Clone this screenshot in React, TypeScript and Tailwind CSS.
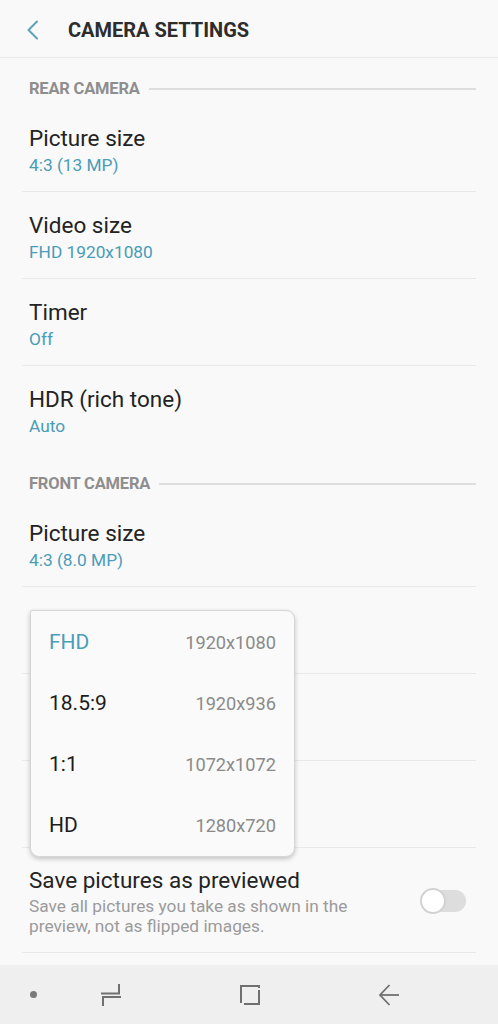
import React from "react";

const teal = "text-[#4a9cb8]";

function Row({ title, sub, divider = true }: { title?: string; sub?: string; divider?: boolean }) {
  return (
    <div className={`mx-[22px] h-[87px] px-[7px] pt-[20px] ${divider ? "border-b border-[#e9e9e9]" : ""}`}>
      {title ? <div className="text-[22.5px] leading-[26px] text-[#232323]">{title}</div> : null}
      {sub ? <div className={`mt-[3px] text-[17.3px] leading-[22px] ${teal}`}>{sub}</div> : null}
    </div>
  );
}

function Section({ label }: { label: string }) {
  return (
    <div className="flex h-[47px] items-center pl-[29px] pr-[22px] pt-[14px]">
      <span className="text-[16.5px] font-bold leading-[20px] tracking-[-0.2px] text-[#8e8e8e]">{label}</span>
      <div className="ml-[9px] h-[2px] flex-1 bg-[#dedede]" />
    </div>
  );
}

function Option({ left, right, active = false }: { left: string; right: string; active?: boolean }) {
  return (
    <div className="flex h-[61px] items-center justify-between px-[18px]">
      <span className={`text-[21px] ${active ? "text-[#4a9cb8]" : "text-[#1c1c1c]"}`}>{left}</span>
      <span className="text-[18.2px] text-[#8a8a8a]">{right}</span>
    </div>
  );
}

export default function App() {
  return (
    <div
      className="relative flex h-[1024px] w-[498px] flex-col overflow-hidden bg-[#f9f9f9]"
      style={{ fontFamily: "Roboto, 'Noto Sans', sans-serif" }}
    >
      {/* Header */}
      <div className="flex h-[58px] shrink-0 items-center border-b border-[#e8e8e8] pt-[3px]">
        <svg width="14" height="20" viewBox="0 0 14 20" className="ml-[26px]">
          <path d="M11 1.5 L2.5 10 L11 18.5" fill="none" stroke="#5aa3bb" strokeWidth="2" strokeLinecap="round" strokeLinejoin="round" />
        </svg>
        <span className="ml-[28px] text-[20px] font-bold text-[#2d2d2d]">CAMERA SETTINGS</span>
      </div>

      <Section label="REAR CAMERA" />
      <Row title="Picture size" sub="4:3 (13 MP)" />
      <Row title="Video size" sub="FHD 1920x1080" />
      <Row title="Timer" sub="Off" />
      <Row title="HDR (rich tone)" sub="Auto" divider={false} />

      <Section label="FRONT CAMERA" />
      <Row title="Picture size" sub="4:3 (8.0 MP)" />
      <Row />
      <Row />
      <Row />

      {/* Save pictures as previewed */}
      <div className="mx-[22px] flex h-[105px] items-center justify-between border-b border-[#e9e9e9] pl-[7px] pr-[10px] pt-[2px]">
        <div>
          <div className="text-[22.5px] leading-[26px] text-[#232323]">Save pictures as previewed</div>
          <div className="mt-[3px] text-[17.3px] leading-[20px] text-[#9b9b9b]">
            Save all pictures you take as shown in the
            <br />
            preview, not as flipped images.
          </div>
        </div>
        <div className="relative flex h-[26px] w-[46px] shrink-0 items-center">
          <div className="ml-[4px] h-[22px] w-[42px] rounded-full bg-[#dddddd]" />
          <div className="absolute left-0 top-0 h-[26px] w-[26px] rounded-full border-[2px] border-[#d2d2d2] bg-white" />
        </div>
      </div>

      <div className="flex-1" />

      {/* Nav bar */}
      <div className="flex h-[59px] shrink-0 items-center bg-[#efefef]">
        <div className="ml-[30px] h-[7px] w-[7px] rounded-full bg-[#7a7a7a]" />
        <svg width="22" height="24" viewBox="0 0 22 24" className="ml-[63px]">
          <path d="M1 10.5 H19 V1" fill="none" stroke="#707070" strokeWidth="2" />
          <path d="M21 14 H3 V23" fill="none" stroke="#707070" strokeWidth="2" />
        </svg>
        <svg width="22" height="22" viewBox="0 0 22 22" className="ml-[117px]">
          <path d="M2 19 V2 H20 V4" fill="none" stroke="#707070" strokeWidth="2" />
          <path d="M20 6 V20 H5" fill="none" stroke="#707070" strokeWidth="2" />
        </svg>
        <svg width="22" height="22" viewBox="0 0 22 22" className="ml-[117px]">
          <path d="M11.5 1 L2 11 L11.5 21" fill="none" stroke="#707070" strokeWidth="1.8" />
          <path d="M2 11 H21" fill="none" stroke="#707070" strokeWidth="1.8" />
        </svg>
      </div>

      {/* Popup */}
      <div className="absolute left-[30px] top-[610px] w-[265px] rounded-[9px] rounded-tl-[2px] border border-[#d6d6d6] bg-[#fafafa] pt-[1px] shadow-[0_2px_5px_rgba(0,0,0,0.22)]">
        <Option left="FHD" right="1920x1080" active />
        <Option left="18.5:9" right="1920x936" />
        <Option left="1:1" right="1072x1072" />
        <Option left="HD" right="1280x720" />
      </div>
    </div>
  );
}
